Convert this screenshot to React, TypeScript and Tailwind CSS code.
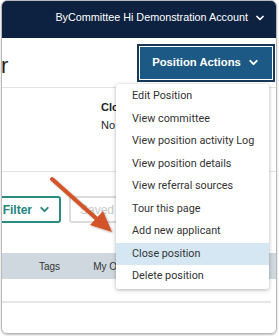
import { ChevronDown } from "lucide-react"

const menuItems = [
  "Edit Position",
  "View committee",
  "View position activity Log",
  "View position details",
  "View referral sources",
  "Tour this page",
  "Add new applicant",
  "Close position",
  "Delete position",
]

export default function App() {
  return (
    <div className="relative h-[336px] w-[279px] overflow-hidden bg-white pl-px font-['Liberation_Sans',Arial,sans-serif]">
      <div className="flex h-[334px] w-[276px] flex-col overflow-hidden rounded-[6px] border border-[#b9b9b9] shadow-[0_1px_2px_rgba(0,0,0,0.25)]">
        {/* top account bar */}
        <div className="flex h-[37px] shrink-0 items-center justify-end bg-[#0d2240] pr-[10px] pb-[4px] text-[10.8px] font-medium text-white">
          <span>ByCommittee Hi Demonstration Account</span>
          <ChevronDown className="ml-[6px] h-[12px] w-[12px]" strokeWidth={3.5} />
        </div>

        {/* title row */}
        <div className="flex h-[50px] shrink-0 items-center justify-between border-b border-[#e3e3e3]">
          <h1 className="-ml-[1px] mt-[6px] text-[22px] leading-none text-[#222]">r</h1>
          <div className="mr-[1px] border-2 border-[#16385a] p-px">
            <button className="flex h-[32px] w-[132px] items-center justify-center bg-[#1c5a85] text-[11.3px] font-bold text-white">
              Position Actions
              <ChevronDown className="ml-[6px] h-[13px] w-[13px]" strokeWidth={3.5} />
            </button>
          </div>
        </div>

        {/* info */}
        <div className="h-[84px] shrink-0 border-b border-[#e3e3e3] pl-[99px] pt-[10px] text-[11px] leading-[18px] text-[#222]">
          <div className="font-bold">Clos</div>
          <div>No</div>
        </div>

        {/* filters and table */}
        <div className="flex flex-1 flex-col">
          <div className="mt-[24px] flex h-[27px] gap-[8px]">
            <button className="-ml-[20px] flex w-[79px] items-center justify-end gap-[6px] rounded-[3px] border-2 border-[#2a8b83] pr-[8px] text-[12px] font-bold text-[#23857c]">
              Filter
              <ChevronDown className="h-[13px] w-[13px]" strokeWidth={3.5} />
            </button>
            <button className="flex w-[52px] items-center overflow-hidden whitespace-nowrap rounded-l-[3px] border-y-2 border-l-2 border-[#dcdcdc] pl-[9px] text-[12px] text-[#c9c9c9]">
              Saved V
            </button>
          </div>
          <div className="mt-[30px] flex h-[26px] items-center bg-[#cfd8df] pl-[37px] text-[10px] text-[#333]">
            <span>Tags</span>
            <span className="ml-[33px]">My Ov</span>
          </div>
          <div className="mt-[22px] mr-[5px] border-b-2 border-[#e6e6e6]" />
        </div>
      </div>

      {/* annotation arrow */}
      <svg className="absolute left-0 top-0" width="279" height="336" viewBox="0 0 279 336">
        <defs>
          <filter id="sh" x="-20%" y="-20%" width="140%" height="140%">
            <feDropShadow dx="1" dy="1" stdDeviation="1" floodColor="#000" floodOpacity="0.3" />
          </filter>
        </defs>
        <g filter="url(#sh)">
          <line x1="52" y1="179" x2="98" y2="220" stroke="#d2542a" strokeWidth="4" strokeLinecap="round" />
          <polygon points="112,232 90,225 103,211" fill="#d2542a" />
        </g>
      </svg>

      {/* dropdown menu */}
      <div className="absolute left-[116px] top-[84px] w-[153px] rounded-[3px] bg-white py-px shadow-[0_1px_4px_rgba(0,0,0,0.3)] font-['Roboto',sans-serif]">
        {menuItems.map((item) => (
          <div
            key={item}
            className={`flex h-[22.5px] items-center pl-[16px] text-[10.8px] text-[#333] ${
              item === "Close position" ? "bg-[#d5e7f3]" : ""
            }`}
          >
            {item}
          </div>
        ))}
      </div>
    </div>
  )
}
